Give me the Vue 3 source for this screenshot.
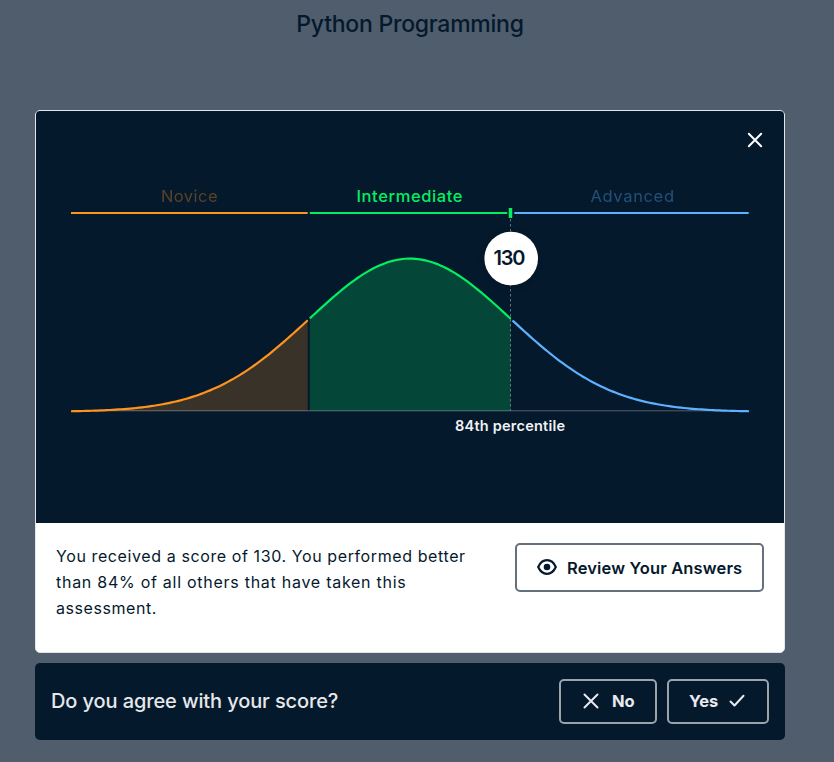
<script setup>
const MEAN = 410
const SIGMA = 100.8
const BASE = 411.8
const HEIGHT = 153.2

// Samples the bell curve between two x positions.
function curve(from, to) {
  const points = []
  const steps = 80
  for (let i = 0; i <= steps; i++) {
    const x = from + ((to - from) * i) / steps
    const y = BASE - HEIGHT * Math.exp(-((x - MEAN) ** 2) / (2 * SIGMA ** 2))
    points.push(`${x.toFixed(2)},${y.toFixed(2)}`)
  }
  return 'M' + points.join('L')
}

function area(from, to) {
  return `${curve(from, to)}V411H${from}Z`
}

const segments = [
  { name: 'novice', from: 71, to: 307.7, barTo: 307.7, label: 'Novice', labelX: 161, labelWidth: 56.5, filled: true },
  { name: 'intermediate', from: 309.8, to: 510.7, barTo: 507.2, label: 'Intermediate', labelX: 356.5, labelWidth: 106, filled: true },
  { name: 'advanced', from: 512.5, to: 749, barFrom: 514.3, barTo: 748.7, label: 'Advanced', labelX: 590.5, labelWidth: 83.5, filled: false },
]
</script>

<template>
  <main class="page">
    <h1 class="title">Python Programming</h1>

    <section class="card">
      <div class="chart">
        <svg class="graph" width="748" height="412" viewBox="36 111 748 412">
          <g v-for="s in segments" :key="s.name" :class="s.name">
            <text class="label" :x="s.labelX" y="202.300" :textLength="s.labelWidth">{{ s.label }}</text>
            <path class="line" :d="`M${s.barFrom ?? s.from} 213H${s.barTo}`" />
            <path v-if="s.filled" class="area" :d="area(s.from, s.to)" />
          </g>
          <path class="baseline" d="M72 410.800H748" />
          <path v-for="s in segments" :key="s.name" class="line" :class="s.name" :d="curve(s.from, s.to)" />
          <path class="marker" d="M510.5 208V218" />
          <path class="dashes" d="M510.5 219V411" />
          <circle class="badge-shadow" cx="511" cy="260" r="27" />
          <circle class="badge" cx="511.2" cy="258.5" r="26.8" />
          <text class="score" x="493.5" y="265.3" textLength="32">130</text>
          <text class="percentile" x="455" y="431" textLength="110">84th percentile</text>
        </svg>
        <button class="close" aria-label="Close">
          <svg width="16" height="16" viewBox="0 0 16 16"><path d="M1.8 1.8 14.2 14.2M14.2 1.8 1.8 14.2" /></svg>
        </button>
      </div>
      <div class="summary">
        <p class="result">
          <span class="l1">You received a score of 130. You performed better</span><br />
          <span class="l2">than 84% of all others that have taken this</span><br />
          <span class="l3">assessment.</span>
        </p>
        <button class="review">
          <svg class="eye" width="20" height="16" viewBox="0 0 20 16">
            <path d="M1.2 8C3.2 3.5 6.2 1.2 10 1.2S16.8 3.5 18.8 8C16.8 12.5 13.8 14.8 10 14.8S3.2 12.5 1.2 8Z" />
            <circle cx="10" cy="8" r="3.3" />
          </svg>
          <span>Review Your Answers</span>
        </button>
      </div>
    </section>

    <section class="feedback">
      <p class="question">Do you agree with your score?</p>
      <button class="choice no">
        <svg width="16" height="16" viewBox="0 0 16 16"><path d="M1.5 1.5 14.5 14.5M14.5 1.5 1.5 14.5" /></svg>
        <span>No</span>
      </button>
      <button class="choice yes">
        <span>Yes</span>
        <svg width="16" height="16" viewBox="0 0 16 16"><path d="M1.5 8.500 5.500 12.500 14.500 2.800" /></svg>
      </button>
    </section>
  </main>
</template>

<style>
body {
  background: #505d6d;
}
</style>

<style scoped>
.page {
  box-sizing: border-box;
  height: 762px;
  padding: 0 49px 0 35px;
  overflow: hidden;
  background: #505d6d;
  color: #05192d;
  font-family: Inter, "Liberation Sans", sans-serif;
}
.title {
  height: 110px;
  margin: 0;
  font-size: 23px;
  line-height: 48px;
  font-weight: 500;
  letter-spacing: -0.25px;
  text-align: center;
}
button {
  display: flex;
  align-items: center;
  box-sizing: border-box;
  margin: 0;
  padding: 0;
  border: 0;
  background: none;
  font-family: inherit;
  white-space: nowrap;
}
.card {
  box-sizing: border-box;
  height: 543px;
  overflow: hidden;
  border: 1px solid #e3e6ea;
  border-radius: 5px;
  background: #fff;
}
.chart {
  position: relative;
  height: 412px;
  background: #05192d;
}
.graph {
  display: block;
}
.line {
  fill: none;
  stroke-width: 2.2;
}
.novice { color: #ff931e; }
.intermediate { color: #03ef62; }
.advanced { color: #5eb1ff; }
.line { stroke: currentColor; }
.area {
  fill: currentColor;
  opacity: 0.21;
}
.label {
  fill: currentColor;
  font-size: 16.5px;
}
.novice .label { opacity: 0.33; }
.intermediate .label { font-weight: 500; }
.advanced .label { opacity: 0.35; }
.baseline {
  stroke: #fff;
  stroke-opacity: 0.3;
}
.marker {
  stroke: #03ef62;
  stroke-width: 3.5;
}
.dashes {
  stroke: #737e8a;
  stroke-width: 0.9;
  stroke-dasharray: 2.500 2.500;
}
.badge { fill: #fff; }
.badge-shadow {
  fill: #000;
  opacity: 0.18;
  filter: blur(3px);
}
.score {
  fill: #05192d;
  font-size: 20px;
  font-weight: 600;
}
.percentile {
  fill: #f1f2f4;
  font-size: 14.5px;
  font-weight: 600;
}
.close {
  position: absolute;
  top: 21px;
  right: 21px;
}
.close path {
  stroke: #fff;
  stroke-width: 2;
  stroke-linecap: round;
}
.summary {
  display: flex;
  justify-content: space-between;
  align-items: flex-start;
  padding: 20px;
}
.result {
  margin: 0;
  font-size: 16px;
  line-height: 26px;
  white-space: nowrap;
}
.l1 { letter-spacing: 0.6px; }
.l2 { letter-spacing: 0.73px; }
.l3 { letter-spacing: 0.56px; }
.review {
  width: 249px;
  height: 49px;
  padding-left: 20px;
  gap: 10px;
  border: 2px solid #65707d;
  border-radius: 5px;
  color: #05192d;
  font-size: 16.5px;
  font-weight: 600;
  letter-spacing: 0.14px;
}
.eye {
  margin-bottom: 1px;
}
.eye path {
  fill: none;
  stroke: #05192d;
  stroke-width: 2.2;
  stroke-linejoin: round;
}
.eye circle { fill: #05192d; }
.feedback {
  display: flex;
  align-items: center;
  box-sizing: border-box;
  height: 77px;
  margin-top: 10px;
  padding: 0 16px;
  gap: 10px;
  border-radius: 5px;
  background: #05192d;
}
.question {
  flex: 1;
  margin: 0;
  padding-bottom: 2px;
  color: #e6e8ea;
  font-size: 20px;
  font-weight: 500;
  letter-spacing: -0.11px;
  white-space: nowrap;
}
.choice {
  height: 45px;
  padding-bottom: 2px;
  gap: 12px;
  border: 2px solid #9ba3ab;
  border-radius: 5px;
  color: #e8eaee;
  font-size: 16.5px;
  font-weight: 700;
}
.choice path {
  fill: none;
  stroke: #e8eaee;
  stroke-width: 2;
  stroke-linecap: round;
  stroke-linejoin: round;
}
.no {
  width: 98px;
  padding-left: 22px;
  gap: 13px;
}
.yes {
  width: 102px;
  padding-left: 20px;
  gap: 11px;
}
</style>
